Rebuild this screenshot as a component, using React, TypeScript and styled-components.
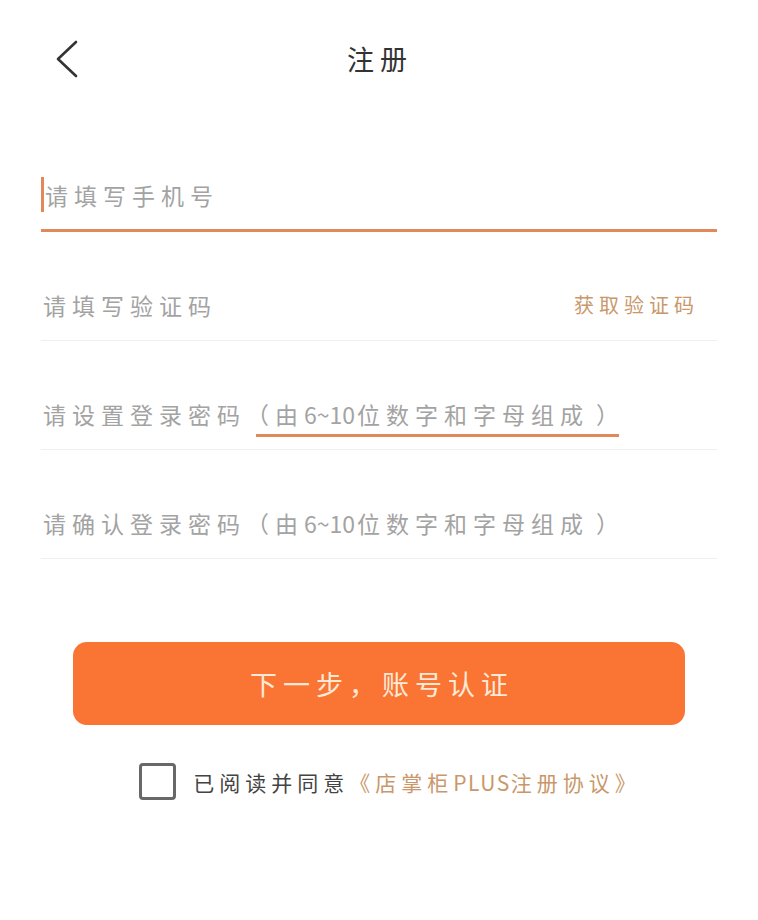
import React from 'react';
import styled, { createGlobalStyle } from 'styled-components';

const GlobalStyle = createGlobalStyle`
  html, body {
    margin: 0;
    padding: 0;
    background: #ffffff;
  }
  body {
    font-family: "Noto Sans CJK SC", "Noto Sans", sans-serif;
  }
`;

const Page = styled.div`
  width: 758px;
  min-height: 920px;
  background: #ffffff;
`;

const Header = styled.div`
  position: relative;
  height: 116px;
  display: flex;
  align-items: center;
  justify-content: center;
`;

const BackButton = styled.div`
  position: absolute;
  left: 52px;
  top: 40px;
  width: 30px;
  height: 38px;
  display: flex;
  align-items: center;
  justify-content: center;
`;

const Title = styled.div`
  font-size: 27px;
  color: #333333;
  letter-spacing: 6px;
  margin-left: 2px;
`;

const Form = styled.div`
  margin-top: 44px;
  padding: 0 41px;
  display: flex;
  flex-direction: column;
  gap: 37px;
`;

const Field = styled.div<{ $active?: boolean }>`
  height: 72px;
  box-sizing: border-box;
  display: flex;
  align-items: center;
  border-bottom: ${p => (p.$active ? '3px solid #e2895c' : '1px solid #efefef')};
  padding-left: ${p => (p.$active ? '0' : '2px')};
`;

const Cursor = styled.div`
  width: 3px;
  height: 35px;
  background: #e2895c;
  margin-right: 1px;
`;

const Placeholder = styled.div`
  flex: 1;
  font-size: 23px;
  color: #a3a3a3;
  letter-spacing: 6px;
  white-space: nowrap;
`;

const Digits = styled.span`
  letter-spacing: 0;
  margin-right: 2px;
`;

const Closing = styled.span`
  letter-spacing: 0;
  margin-left: 7px;
`;

const Marked = styled.span`
  display: inline-block;
  padding: 0 0 3px 19px;
  margin-left: -19px;
  border-bottom: 3px solid #e2895c;
  margin-bottom: -6px;
`;

const CodeLink = styled.div`
  font-size: 20px;
  color: #c9976a;
  letter-spacing: 5px;
  margin-right: 18px;
`;

const SubmitButton = styled.button`
  display: flex;
  align-items: center;
  justify-content: center;
  width: 612px;
  height: 83px;
  margin: 83px 0 0 73px;
  border: none;
  border-radius: 14px;
  background: #fa7434;
  color: #fde9d6;
  font-family: "Noto Sans CJK SC", "Noto Sans", sans-serif;
  font-size: 27px;
  letter-spacing: 6px;
  padding: 0 0 0 6px;
`;

const Agreement = styled.div`
  margin-top: 38px;
  display: flex;
  align-items: center;
  justify-content: center;
  gap: 17px;
  padding-left: 22px;
`;

const CheckBox = styled.div`
  width: 37px;
  height: 37px;
  box-sizing: border-box;
  border: 3px solid #686868;
  border-radius: 4px;
`;

const AgreeText = styled.div`
  font-size: 21px;
  color: #444444;
  letter-spacing: 5px;
  white-space: nowrap;
`;

const Protocol = styled.span`
  color: #c9976a;
`;

const Latin = styled.span`
  letter-spacing: 1.5px;
`;

const BackIcon = () => (
  <svg width="26" height="38" viewBox="0 0 26 38" fill="none">
    <polyline
      points="22,2 4,19 22,36"
      stroke="#333333"
      strokeWidth="2.6"
      strokeLinecap="round"
      strokeLinejoin="round"
    />
  </svg>
);

const App = () => {
  return (
    <Page>
      <GlobalStyle />
      <Header>
        <BackButton>
          <BackIcon />
        </BackButton>
        <Title>注册</Title>
      </Header>
      <Form>
        <Field $active>
          <Cursor />
          <Placeholder>请填写手机号</Placeholder>
        </Field>
        <Field>
          <Placeholder>请填写验证码</Placeholder>
          <CodeLink>获取验证码</CodeLink>
        </Field>
        <Field>
          <Placeholder>
            请设置登录密码（
            <Marked>
              由<Digits>6~10</Digits>位数字和字母组成<Closing>）</Closing>
            </Marked>
          </Placeholder>
        </Field>
        <Field>
          <Placeholder>
            请确认登录密码（由<Digits>6~10</Digits>位数字和字母组成<Closing>）</Closing>
          </Placeholder>
        </Field>
      </Form>
      <SubmitButton>下一步，账号认证</SubmitButton>
      <Agreement>
        <CheckBox />
        <AgreeText>
          已阅读并同意
          <Protocol>
            《店掌柜<Latin>PLUS</Latin>注册协议》
          </Protocol>
        </AgreeText>
      </Agreement>
    </Page>
  );
};

export default App;
